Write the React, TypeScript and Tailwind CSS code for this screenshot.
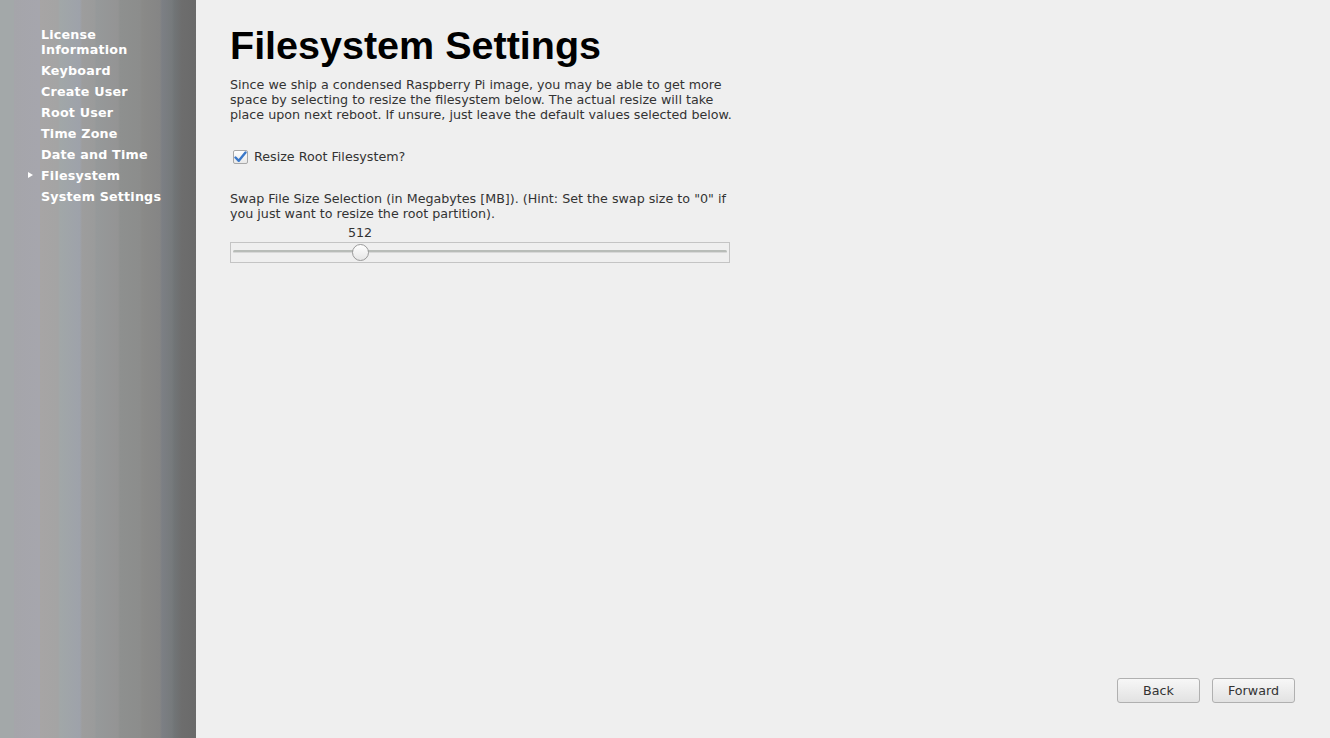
import React from 'react';

const NAV = [
  'License Information',
  'Keyboard',
  'Create User',
  'Root User',
  'Time Zone',
  'Date and Time',
  'Filesystem',
  'System Settings',
];

export default function App() {
  return (
    <div className="flex w-[1330px] h-[738px] bg-[#efefef] font-['DejaVu_Sans',sans-serif] overflow-hidden">
      {/* Sidebar */}
      <div className="w-[196px] shrink-0 h-full bg-[linear-gradient(90deg,#a3a8a9_0px,#a3a8a9_14px,#a5a5aa_14px,#a6a6ad_40px,#a7a5a5_40px,#a4a4a4_58px,#a1a7a8_60px,#9ea2aa_80px,#9d9d9d_82px,#9a9b9b_95px,#96999a_96px,#949494_118px,#8e908f_120px,#8c8d8c_140px,#8a8a88_142px,#858585_160px,#7c7f84_162px,#767a7c_172px,#717577_174px,#6d6d6d_182px,#6a6a6a_196px)] pt-[27px]">
        <ul className="flex flex-col gap-[6px]">
          {NAV.map((item) => (
            <li key={item} className="relative pl-[41px] pr-4 text-[12.7px] leading-[15px] font-bold text-white tracking-[0.2px]">
              {item === 'Filesystem' && (
                <span className="absolute left-[28px] top-[4px] w-0 h-0 border-y-[3.5px] border-y-transparent border-l-[5px] border-l-white" />
              )}
              {item === 'License Information' ? (
                <>License<br />Information</>
              ) : (
                item
              )}
            </li>
          ))}
        </ul>
      </div>

      {/* Main */}
      <div className="flex-1 flex flex-col pl-[34px] pr-[35px] pb-[35px]">
        <h1 className="mt-[23px] font-['Liberation_Sans',Arial,sans-serif] font-bold text-[39.5px] leading-[45px] text-black">
          Filesystem Settings
        </h1>
        <p className="mt-[9px] w-[502px] text-[12.7px] leading-[15px] text-[#333333]">
          Since we ship a condensed Raspberry Pi image, you may be able to get more space by selecting to resize the filesystem below. The actual resize will take place upon next reboot. If unsure, just leave the default values selected below.
        </p>

        <label className="mt-[27px] flex items-center gap-[6px] text-[12.7px] leading-[15px] text-[#333333]">
          <span className="ml-[3px] w-[15px] h-[14px] border border-[#a8a8a8] rounded-[2px] bg-[linear-gradient(180deg,#ffffff,#e8e8e8)] flex items-center justify-center">
            <svg width="13" height="12" viewBox="0 0 13 12">
              <path d="M1.5 6.5 L4.8 9.8 L11.5 1.5" fill="none" stroke="#3a78c9" strokeWidth="2.4" strokeLinecap="round" strokeLinejoin="round" />
            </svg>
          </span>
          Resize Root Filesystem?
        </label>

        <p className="mt-[27px] w-[502px] text-[12.7px] leading-[15px] text-[#333333]">
          Swap File Size Selection (in Megabytes [MB]). (Hint: Set the swap size to "0" if you just want to resize the root partition).
        </p>

        <div className="mt-[4px] w-[500px]">
          <div className="relative h-[15px] text-[12.7px] leading-[15px] text-[#333333]">
            <span className="absolute left-[130px] -translate-x-1/2">512</span>
          </div>
          <div className="relative mt-[2px] h-[21px] border border-[#c4c4c4] bg-[#efefef]">
            <div className="absolute left-[2px] right-[2px] top-[7px] h-[3px] rounded-full bg-[#b8bcb8] border-b border-[#d8d8d8]" />
            <div className="absolute left-[121px] top-[1px] w-[17px] h-[17px] rounded-full border border-[#9a9a9a] bg-[linear-gradient(180deg,#ffffff,#e6e6e6)]" />
          </div>
        </div>

        <div className="mt-auto flex justify-end gap-[12px]">
          <button className="w-[83px] h-[25px] rounded-[3px] border border-[#b0b0b0] bg-[linear-gradient(180deg,#f7f7f7,#e2e2e2)] text-[12.7px] text-[#333333]">
            Back
          </button>
          <button className="w-[83px] h-[25px] rounded-[3px] border border-[#b0b0b0] bg-[linear-gradient(180deg,#f7f7f7,#e2e2e2)] text-[12.7px] text-[#333333]">
            Forward
          </button>
        </div>
      </div>
    </div>
  );
}
